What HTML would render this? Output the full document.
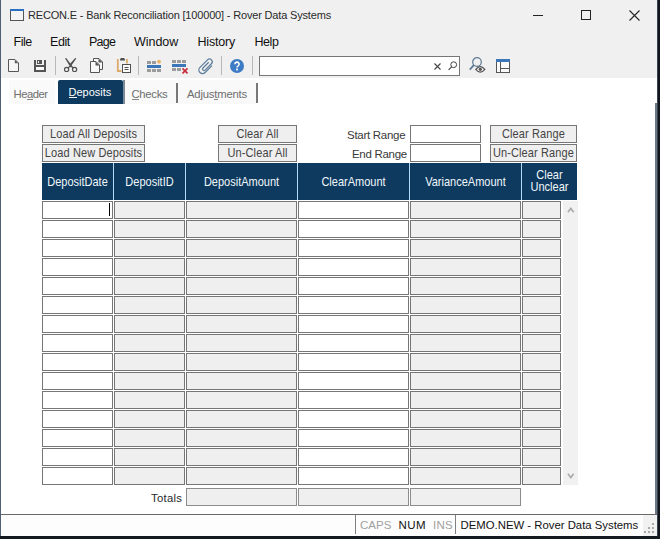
<!DOCTYPE html>
<html><head><meta charset="utf-8">
<style>
*{box-sizing:border-box}
html,body{margin:0;padding:0}
body{width:660px;height:539px;overflow:hidden;position:relative;background:#f0f0f0;font-family:"Liberation Sans",sans-serif;color:#222}
.a{position:absolute}
.t{position:absolute;white-space:nowrap;line-height:1}
.btn{position:absolute;height:18px;border:1px solid #767676;background:#efefef;font-size:11px;letter-spacing:0.12px;color:#444;text-align:center;line-height:17px;white-space:nowrap}
.btn span{display:inline-block;transform:scaleY(1.1);transform-origin:50% 80%}
.hd{position:absolute;top:163px;height:37px;background:#0d3a5e;color:#f2f7fc;font-size:11px;text-align:center;display:flex;align-items:center;justify-content:center;line-height:12px}
.hd span{display:inline-block;transform:scaleY(1.1)}
.c{position:absolute;height:18px;border:1px solid #767676}
.w{background:#fff}
.g{background:#efefef}
.sep{position:absolute;width:1px;background:#b8b8b8}
svg{position:absolute;overflow:visible}
</style></head><body>
<!-- title bar -->
<svg style="left:10px;top:9px" width="14" height="12" viewBox="0 0 14 12">
<rect x="0.5" y="0.5" width="13" height="11" fill="#f4f4f4" stroke="#555" stroke-width="1"/>
<rect x="0" y="0" width="14" height="2" fill="#2a70c2"/>
</svg>
<div class="t" style="left:28px;top:10px;font-size:11px;letter-spacing:-0.17px;color:#2a2a2a">RECON.E - Bank Reconciliation [100000] - Rover Data Systems</div>
<div class="a" style="left:533px;top:15px;width:10px;height:1px;background:#222"></div>
<div class="a" style="left:581px;top:10px;width:10px;height:10px;border:1px solid #222"></div>
<svg style="left:629px;top:10px" width="11" height="11" viewBox="0 0 11 11"><path d="M0.5 0.5L10.5 10.5M10.5 0.5L0.5 10.5" stroke="#222" stroke-width="1.1"/></svg>

<!-- menu -->
<div class="t" style="left:13.5px;top:36px;font-size:12.5px;letter-spacing:-0.45px;color:#111">File</div>
<div class="t" style="left:50px;top:36px;font-size:12.5px;letter-spacing:-0.45px;color:#111">Edit</div>
<div class="t" style="left:89px;top:36px;font-size:12.5px;letter-spacing:-0.75px;color:#111">Page</div>
<div class="t" style="left:134px;top:36px;font-size:12.5px;letter-spacing:-0.05px;color:#111">Window</div>
<div class="t" style="left:197.5px;top:36px;font-size:12.5px;letter-spacing:-0.2px;color:#111">History</div>
<div class="t" style="left:254.5px;top:36px;font-size:12.5px;letter-spacing:-0.45px;color:#111">Help</div>

<!-- toolbar -->
<!-- new doc -->
<svg style="left:8px;top:59px" width="12" height="14" viewBox="0 0 12 14">
<path d="M0.5 0.5H7L10.5 4V12.5H0.5Z" fill="#f6f6f6" stroke="#575757" stroke-width="1"/>
<path d="M6.8 0.8L10.2 4.2H6.8Z" fill="#575757"/>
</svg>
<!-- save -->
<svg style="left:34px;top:60px" width="12" height="12" viewBox="0 0 12 12">
<path d="M0 0H2V10H10V0H12V12H0Z" fill="#555"/>
<rect x="3" y="0" width="5" height="4" fill="#555"/>
<rect x="4" y="1" width="1" height="2" fill="#f0f0f0"/>
<rect x="2" y="5" width="8" height="2" fill="#555"/>
<rect x="2" y="7" width="8" height="3" fill="#fafafa"/>
</svg>
<div class="sep" style="left:55px;top:56px;height:19px"></div>
<!-- scissors -->
<svg style="left:63px;top:58px" width="15" height="15" viewBox="0 0 15 15">
<path d="M2 0.2L3.2 0L9.6 8.4L7.4 9.2Z" fill="#505050"/>
<path d="M12.2 0L13.3 0.4L8.4 7.4L6.6 6.3Z" fill="#505050"/>
<path d="M5 9.8L7.4 8.2M10 9.8L8.2 8.2" stroke="#505050" stroke-width="1.3"/>
<circle cx="3.6" cy="11.4" r="2.1" fill="none" stroke="#505050" stroke-width="1.15"/>
<circle cx="11.6" cy="11.4" r="2.1" fill="none" stroke="#505050" stroke-width="1.15"/>
</svg>
<!-- copy -->
<svg style="left:90px;top:58px" width="14" height="15" viewBox="0 0 14 15">
<path d="M3.5 0.5H9L12.5 4V11.5H3.5Z" fill="#f8f8f8" stroke="#555" stroke-width="1"/>
<path d="M8.5 0.5L12.5 4.5H8.5Z" fill="#555"/>
<path d="M0.5 3.5H6L9.5 7V14.5H0.5Z" fill="#f8f8f8" stroke="#555" stroke-width="1"/>
<path d="M5.5 3.5L9.5 7.5H5.5Z" fill="#555"/>
</svg>
<!-- paste -->
<svg style="left:116px;top:58px" width="15" height="15" viewBox="0 0 15 15">
<path d="M1.8 1V13H5.5M10.9 1V5.5" fill="none" stroke="#dcaa6a" stroke-width="1.8"/>
<path d="M4 2.5H9V1.2L8 0H5L4 1.2Z" fill="#505050"/>
<rect x="6.5" y="6.5" width="8" height="8" fill="#fafafa" stroke="#505050" stroke-width="1"/>
<rect x="8.5" y="9" width="4" height="1" fill="#505050"/>
<rect x="8.5" y="11" width="4" height="1" fill="#505050"/>
</svg>
<div class="sep" style="left:138px;top:56px;height:19px"></div>
<!-- insert row -->
<svg style="left:147px;top:59px" width="16" height="14" viewBox="0 0 16 14">
<rect x="0" y="2" width="4" height="3" fill="#9b9b9b"/>
<rect x="5" y="2" width="4" height="3" fill="#9b9b9b"/>
<circle cx="12" cy="2.7" r="1.9" fill="#eeb064"/>
<rect x="0" y="6" width="14" height="3" fill="#3b76b8"/>
<rect x="0" y="10" width="4" height="3" fill="#9b9b9b"/>
<rect x="5" y="10" width="4" height="3" fill="#9b9b9b"/>
<rect x="10" y="10" width="4" height="3" fill="#9b9b9b"/>
</svg>
<!-- delete row -->
<svg style="left:172px;top:60px" width="17" height="14" viewBox="0 0 17 14">
<rect x="0" y="0" width="4" height="3" fill="#9b9b9b"/>
<rect x="5" y="0" width="4" height="3" fill="#9b9b9b"/>
<rect x="10" y="0" width="4" height="3" fill="#9b9b9b"/>
<rect x="0" y="4" width="14" height="3" fill="#3b76b8"/>
<rect x="0" y="8" width="4" height="3" fill="#9b9b9b"/>
<rect x="5" y="8" width="4" height="3" fill="#9b9b9b"/>
<path d="M10.5 8.3L15.5 13.3M15.5 8.3L10.5 13.3" stroke="#c8303c" stroke-width="1.7"/>
</svg>
<!-- paperclip -->
<svg style="left:196px;top:56px" width="20" height="20" viewBox="0 0 20 20">
<path d="M16.75 6V17.5A4.25 4.25 0 0 1 8.25 17.5V5A3.25 3.25 0 0 1 14.75 5V15.5A1.75 1.75 0 0 1 11.25 15.5V6" fill="none" stroke="#5f7e9c" stroke-width="1.5" transform="translate(10 10.5) rotate(45) scale(0.85) translate(-12.5 -11.75)"/>
</svg>
<div class="sep" style="left:221px;top:56px;height:19px"></div>
<!-- help -->
<svg style="left:230px;top:59px" width="14" height="14" viewBox="0 0 14 14">
<circle cx="7" cy="7" r="7" fill="#3d7cc4"/>
<path d="M4.9 5.3A2.1 2.1 0 1 1 7.9 7.1C7.2 7.5 7 7.8 7 8.6" fill="none" stroke="#fff" stroke-width="1.6"/>
<rect x="6.1" y="9.6" width="1.8" height="1.8" fill="#fff"/>
</svg>
<div class="sep" style="left:252px;top:56px;height:19px"></div>
<!-- search box -->
<div class="a" style="left:259px;top:56px;width:201px;height:20px;background:#fff;border:1px solid #767676"></div>
<svg style="left:434px;top:63px" width="7" height="7" viewBox="0 0 7 7"><path d="M0.5 0.5L6.5 6.5M6.5 0.5L0.5 6.5" stroke="#444" stroke-width="1.1"/></svg>
<svg style="left:448px;top:61px" width="10" height="10" viewBox="0 0 10 10">
<circle cx="5.7" cy="3.7" r="2.9" fill="none" stroke="#444" stroke-width="1"/>
<path d="M3.6 5.8L0.6 8.8" stroke="#444" stroke-width="1.2"/>
</svg>
<!-- search eye -->
<svg style="left:468px;top:57px" width="18" height="16" viewBox="0 0 18 16">
<circle cx="9" cy="5" r="4.3" fill="none" stroke="#5f7993" stroke-width="1.2"/>
<path d="M5.8 8.2L1.8 12.6" stroke="#5f7993" stroke-width="1.8"/>
<path d="M7.8 12.3Q12.3 6.8 16.8 12.3Q12.3 17.8 7.8 12.3Z" fill="#f4f4f4" stroke="#555" stroke-width="1.3"/>
<circle cx="12.3" cy="12.3" r="1.6" fill="#555"/>
</svg>
<!-- layout -->
<svg style="left:496px;top:59px" width="14" height="14" viewBox="0 0 14 14">
<rect x="0.5" y="0.5" width="13" height="13" fill="#fafafa" stroke="#555" stroke-width="1"/>
<rect x="0" y="0" width="14" height="3" fill="#3b76b8"/>
<rect x="4" y="3" width="1" height="10" fill="#555"/>
<rect x="5" y="9" width="8" height="1" fill="#555"/>
</svg>

<!-- tab strip -->
<div class="a" style="left:1px;top:78px;width:656px;height:26px;background:#fff"></div>
<div class="a" style="left:9px;top:80px;width:46px;height:24px;background:#fafafa"></div>
<div class="a" style="left:178px;top:80px;width:78px;height:24px;background:#f9f9f9"></div>
<div class="a" style="left:125px;top:80px;width:51px;height:24px;background:#f9f9f9"></div>
<div class="t" style="left:13.5px;top:89px;font-size:11.3px;letter-spacing:-0.5px;color:#6e6e6e">Header</div>
<div class="a" style="left:58px;top:80px;width:65px;height:24px;background:#0d3a5e;border-radius:2px 2px 0 0"></div>
<div class="t" style="left:68.5px;top:87px;font-size:11px;color:#fff">Deposits</div>
<div class="a" style="left:69px;top:97px;width:8px;height:1px;background:#fff"></div>
<div class="a" style="left:123px;top:80px;width:2px;height:24px;background:#7d8a98"></div>
<div class="a" style="left:132px;top:99px;width:7px;height:1px;background:#888"></div>
<div class="a" style="left:27px;top:99px;width:6px;height:1px;background:#888"></div>
<div class="a" style="left:214px;top:99px;width:4px;height:1px;background:#888"></div>
<div class="t" style="left:131.5px;top:89px;font-size:11.3px;letter-spacing:-0.3px;color:#6e6e6e">Checks</div>
<div class="a" style="left:176px;top:83px;width:2px;height:20px;background:#777"></div>
<div class="t" style="left:187px;top:89px;font-size:11.3px;letter-spacing:-0.2px;color:#6e6e6e">Adjustments</div>
<div class="a" style="left:256px;top:83px;width:2px;height:20px;background:#777"></div>

<!-- content -->
<div class="a" style="left:1px;top:104px;width:656px;height:410px;background:#fff"></div>
<div class="a" style="left:655px;top:103px;width:2px;height:411px;background:#6b7886"></div>

<div class="btn" style="left:42px;top:125px;width:103px"><span>Load All Deposits</span></div>
<div class="btn" style="left:42px;top:144px;width:103px"><span>Load New Deposits</span></div>
<div class="btn" style="left:218px;top:125px;width:79px"><span>Clear All</span></div>
<div class="btn" style="left:218px;top:144px;width:79px"><span>Un-Clear All</span></div>
<div class="t" style="left:347px;top:130px;font-size:11.5px;letter-spacing:-0.28px;color:#3a3a3a">Start Range</div>
<div class="t" style="left:352px;top:149px;font-size:11.5px;letter-spacing:-0.3px;color:#3a3a3a">End Range</div>
<div class="c w" style="left:410px;top:125px;width:71px"></div>
<div class="c w" style="left:410px;top:144px;width:71px"></div>
<div class="btn" style="left:490px;top:125px;width:87px"><span>Clear Range</span></div>
<div class="btn" style="left:490px;top:144px;width:87px"><span>Un-Clear Range</span></div>

<!-- header -->
<div class="a" style="left:42px;top:163px;width:535px;height:37px;background:#b4d9f4"></div>
<div class="hd" style="left:42px;width:71px"><span>DepositDate</span></div>
<div class="hd" style="left:114px;width:71px"><span>DepositID</span></div>
<div class="hd" style="left:186px;width:111px"><span>DepositAmount</span></div>
<div class="hd" style="left:298px;width:111px"><span>ClearAmount</span></div>
<div class="hd" style="left:410px;width:111px"><span>VarianceAmount</span></div>
<div class="hd" style="left:522px;width:55px;line-height:10.6px;padding-bottom:2px"><span>Clear<br>Unclear</span></div>

<div class="c w" style="left:42px;top:201px;width:71px"></div>
<div class="c g" style="left:114px;top:201px;width:71px"></div>
<div class="c g" style="left:186px;top:201px;width:111px"></div>
<div class="c w" style="left:298px;top:201px;width:111px"></div>
<div class="c g" style="left:410px;top:201px;width:111px"></div>
<div class="c g" style="left:522px;top:201px;width:39px"></div>
<div class="c w" style="left:42px;top:220px;width:71px"></div>
<div class="c g" style="left:114px;top:220px;width:71px"></div>
<div class="c g" style="left:186px;top:220px;width:111px"></div>
<div class="c w" style="left:298px;top:220px;width:111px"></div>
<div class="c g" style="left:410px;top:220px;width:111px"></div>
<div class="c g" style="left:522px;top:220px;width:39px"></div>
<div class="c w" style="left:42px;top:239px;width:71px"></div>
<div class="c g" style="left:114px;top:239px;width:71px"></div>
<div class="c g" style="left:186px;top:239px;width:111px"></div>
<div class="c w" style="left:298px;top:239px;width:111px"></div>
<div class="c g" style="left:410px;top:239px;width:111px"></div>
<div class="c g" style="left:522px;top:239px;width:39px"></div>
<div class="c w" style="left:42px;top:258px;width:71px"></div>
<div class="c g" style="left:114px;top:258px;width:71px"></div>
<div class="c g" style="left:186px;top:258px;width:111px"></div>
<div class="c w" style="left:298px;top:258px;width:111px"></div>
<div class="c g" style="left:410px;top:258px;width:111px"></div>
<div class="c g" style="left:522px;top:258px;width:39px"></div>
<div class="c w" style="left:42px;top:277px;width:71px"></div>
<div class="c g" style="left:114px;top:277px;width:71px"></div>
<div class="c g" style="left:186px;top:277px;width:111px"></div>
<div class="c w" style="left:298px;top:277px;width:111px"></div>
<div class="c g" style="left:410px;top:277px;width:111px"></div>
<div class="c g" style="left:522px;top:277px;width:39px"></div>
<div class="c w" style="left:42px;top:296px;width:71px"></div>
<div class="c g" style="left:114px;top:296px;width:71px"></div>
<div class="c g" style="left:186px;top:296px;width:111px"></div>
<div class="c w" style="left:298px;top:296px;width:111px"></div>
<div class="c g" style="left:410px;top:296px;width:111px"></div>
<div class="c g" style="left:522px;top:296px;width:39px"></div>
<div class="c w" style="left:42px;top:315px;width:71px"></div>
<div class="c g" style="left:114px;top:315px;width:71px"></div>
<div class="c g" style="left:186px;top:315px;width:111px"></div>
<div class="c w" style="left:298px;top:315px;width:111px"></div>
<div class="c g" style="left:410px;top:315px;width:111px"></div>
<div class="c g" style="left:522px;top:315px;width:39px"></div>
<div class="c w" style="left:42px;top:334px;width:71px"></div>
<div class="c g" style="left:114px;top:334px;width:71px"></div>
<div class="c g" style="left:186px;top:334px;width:111px"></div>
<div class="c w" style="left:298px;top:334px;width:111px"></div>
<div class="c g" style="left:410px;top:334px;width:111px"></div>
<div class="c g" style="left:522px;top:334px;width:39px"></div>
<div class="c w" style="left:42px;top:353px;width:71px"></div>
<div class="c g" style="left:114px;top:353px;width:71px"></div>
<div class="c g" style="left:186px;top:353px;width:111px"></div>
<div class="c w" style="left:298px;top:353px;width:111px"></div>
<div class="c g" style="left:410px;top:353px;width:111px"></div>
<div class="c g" style="left:522px;top:353px;width:39px"></div>
<div class="c w" style="left:42px;top:372px;width:71px"></div>
<div class="c g" style="left:114px;top:372px;width:71px"></div>
<div class="c g" style="left:186px;top:372px;width:111px"></div>
<div class="c w" style="left:298px;top:372px;width:111px"></div>
<div class="c g" style="left:410px;top:372px;width:111px"></div>
<div class="c g" style="left:522px;top:372px;width:39px"></div>
<div class="c w" style="left:42px;top:391px;width:71px"></div>
<div class="c g" style="left:114px;top:391px;width:71px"></div>
<div class="c g" style="left:186px;top:391px;width:111px"></div>
<div class="c w" style="left:298px;top:391px;width:111px"></div>
<div class="c g" style="left:410px;top:391px;width:111px"></div>
<div class="c g" style="left:522px;top:391px;width:39px"></div>
<div class="c w" style="left:42px;top:410px;width:71px"></div>
<div class="c g" style="left:114px;top:410px;width:71px"></div>
<div class="c g" style="left:186px;top:410px;width:111px"></div>
<div class="c w" style="left:298px;top:410px;width:111px"></div>
<div class="c g" style="left:410px;top:410px;width:111px"></div>
<div class="c g" style="left:522px;top:410px;width:39px"></div>
<div class="c w" style="left:42px;top:429px;width:71px"></div>
<div class="c g" style="left:114px;top:429px;width:71px"></div>
<div class="c g" style="left:186px;top:429px;width:111px"></div>
<div class="c w" style="left:298px;top:429px;width:111px"></div>
<div class="c g" style="left:410px;top:429px;width:111px"></div>
<div class="c g" style="left:522px;top:429px;width:39px"></div>
<div class="c w" style="left:42px;top:448px;width:71px"></div>
<div class="c g" style="left:114px;top:448px;width:71px"></div>
<div class="c g" style="left:186px;top:448px;width:111px"></div>
<div class="c w" style="left:298px;top:448px;width:111px"></div>
<div class="c g" style="left:410px;top:448px;width:111px"></div>
<div class="c g" style="left:522px;top:448px;width:39px"></div>
<div class="c w" style="left:42px;top:467px;width:71px"></div>
<div class="c g" style="left:114px;top:467px;width:71px"></div>
<div class="c g" style="left:186px;top:467px;width:111px"></div>
<div class="c w" style="left:298px;top:467px;width:111px"></div>
<div class="c g" style="left:410px;top:467px;width:111px"></div>
<div class="c g" style="left:522px;top:467px;width:39px"></div>
<div class="a" style="left:109px;top:203px;width:1px;height:13px;background:#000"></div>

<!-- scrollbar -->
<div class="a" style="left:563px;top:201px;width:15px;height:284px;background:#f1f1f1"></div>
<svg style="left:567px;top:207px" width="8" height="6" viewBox="0 0 8 6"><path d="M0.9 5.2L3.8 1.4L6.7 5.2" fill="none" stroke="#aaaaaa" stroke-width="1.6"/></svg>
<svg style="left:567px;top:473px" width="8" height="6" viewBox="0 0 8 6"><path d="M0.9 0.8L3.8 4.6L6.7 0.8" fill="none" stroke="#aaaaaa" stroke-width="1.6"/></svg>
<!-- totals -->
<div class="t" style="left:151px;top:492.5px;font-size:11.3px;letter-spacing:0.3px;color:#2a2a2a">Totals</div>
<div class="c g" style="left:186px;top:488px;width:111px;border-color:#8c8c8c"></div>
<div class="c g" style="left:298px;top:488px;width:111px;border-color:#8c8c8c"></div>
<div class="c g" style="left:410px;top:488px;width:111px;border-color:#8c8c8c"></div>

<!-- status bar -->
<div class="a" style="left:1px;top:514px;width:656px;height:1px;background:#6a6a6a"></div>
<div class="a" style="left:1px;top:515px;width:656px;height:21px;background:#fdfdfd"></div>
<div class="a" style="left:355px;top:515px;width:1px;height:19px;background:#808080"></div>
<div class="a" style="left:455px;top:515px;width:1px;height:19px;background:#808080"></div>
<div class="t" style="left:360px;top:520px;font-size:11.5px;color:#a0a0a0">CAPS</div>
<div class="t" style="left:398.5px;top:520px;font-size:11.5px;letter-spacing:0.4px;color:#111">NUM</div>
<div class="t" style="left:433px;top:520px;font-size:11.5px;letter-spacing:0.3px;color:#a0a0a0">INS</div>
<div class="t" style="left:460.5px;top:520px;font-size:11.35px;color:#111">DEMO.NEW - Rover Data Systems</div>
<div class="a" style="left:643px;top:515px;width:14px;height:21px;background:#f1f1f1"></div>
<svg style="left:644px;top:523px" width="11" height="11" viewBox="0 0 11 11">
<rect x="8" y="0" width="2" height="2" fill="#aaa"/>
<rect x="4" y="4" width="2" height="2" fill="#aaa"/><rect x="8" y="4" width="2" height="2" fill="#aaa"/>
<rect x="0" y="8" width="2" height="2" fill="#aaa"/><rect x="4" y="8" width="2" height="2" fill="#aaa"/><rect x="8" y="8" width="2" height="2" fill="#aaa"/>
</svg>
<!-- window borders -->
<div class="a" style="left:0;top:0;width:1px;height:539px;background:#506074"></div>
<div class="a" style="left:657px;top:0;width:1px;height:539px;background:#3a4450"></div>
<div class="a" style="left:658px;top:0;width:2px;height:539px;background:#10151b"></div>
<div class="a" style="left:0;top:536px;width:660px;height:3px;background:#141a20"></div>

</body></html>
